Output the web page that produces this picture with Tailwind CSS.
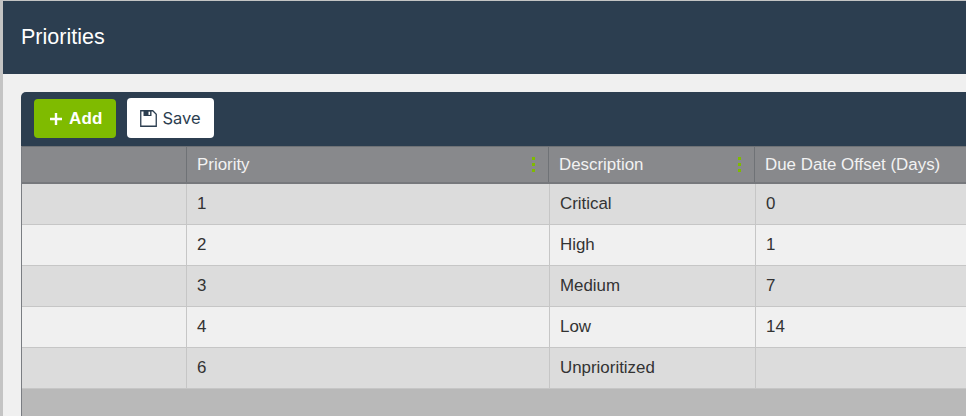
<!DOCTYPE html>
<html lang="en">
<head>
    <meta charset="UTF-8">
    <title>Priorities</title>
    <script src="https://cdn.jsdelivr.net/npm/@tailwindcss/browser@4"></script>
</head>
<body class="w-[966px] h-[416px] overflow-hidden bg-[#f0f0f0] font-['Liberation_Sans',Arial,sans-serif]">
    <div class="h-full border-l-[3px] border-[#c4c4c4] flex flex-col overflow-hidden">
        <!-- Page title -->
        <header class="h-[74px] shrink-0 border-t border-[#c4c4c4] bg-[#2c3e50] pl-[18px] pt-[21px]">
            <h1 class="text-[21.5px] leading-[30px] text-white">Priorities</h1>
        </header>

        <div class="pl-[18px] pt-[18px] w-[1100px]">
            <!-- Toolbar -->
            <div class="h-[54px] rounded-tl-[5px] bg-[#2c3e50] pl-[13px] pt-[7px] flex items-start gap-[11px]">
                <button class="h-[39px] w-[82px] rounded-[4px] bg-[#7fbb00] text-white font-bold text-[17px] tracking-[0.2px] flex items-center pl-[16px] gap-[7px]">
                    <svg class="w-[12px] h-[12px]" viewBox="0 0 12 12" fill="none" stroke="currentColor" stroke-width="2.4">
                        <path d="M6 0v12M0 6h12" />
                    </svg>
                    Add
                </button>
                <button class="h-[40px] w-[87px] -mt-px rounded-[4px] bg-white text-[#2c3e50] text-[16.5px] font-['Inter',sans-serif] flex items-center justify-center gap-[5px]">
                    <svg class="w-[17px] h-[17px]" viewBox="0 0 17 17" fill="none">
                        <path d="M0.75 0.75h12l3.5 3.5v12h-15.5z" stroke="#2c3e50" stroke-width="1.3" />
                        <rect x="3.5" y="1" width="8" height="5" fill="#2c3e50" />
                        <rect x="8.5" y="1.7" width="1.6" height="3.2" fill="#ffffff" />
                    </svg>
                    <span class="pt-px">Save</span>
                </button>
            </div>

            <!-- Grid -->
            <div class="border-l border-[#7a7d82]">
                <div class="grid grid-cols-[165px_362px_206px_1fr] h-[38px] bg-[#88898c] border-t border-[#6f7276] border-b-2 border-b-[#76787c] text-[16.9px] text-[#f2f2f2]">
                    <div class="border-r border-[#6f7276]"></div>
                    <div class="border-r border-[#6f7276] pl-[10px] pr-[13px] flex items-center justify-between">
                        <span>Priority</span>
                        <span class="flex flex-col gap-[3px]">
                            <i class="w-[3px] h-[3px] bg-[#7fbb00]"></i>
                            <i class="w-[3px] h-[3px] bg-[#7fbb00]"></i>
                            <i class="w-[3px] h-[3px] bg-[#7fbb00]"></i>
                        </span>
                    </div>
                    <div class="border-r border-[#6f7276] pl-[10px] pr-[13px] flex items-center justify-between">
                        <span>Description</span>
                        <span class="flex flex-col gap-[3px]">
                            <i class="w-[3px] h-[3px] bg-[#7fbb00]"></i>
                            <i class="w-[3px] h-[3px] bg-[#7fbb00]"></i>
                            <i class="w-[3px] h-[3px] bg-[#7fbb00]"></i>
                        </span>
                    </div>
                    <div class="pl-[10px] flex items-center">Due Date Offset (Days)</div>
                </div>

                <div class="text-[16.9px] text-[#333333]">
                    <div class="grid grid-cols-[165px_363px_206px_1fr] h-[41px] bg-[#dcdcdc] border-b border-[#c6c6c6]">
                        <div class="border-r border-[#c6c6c6]"></div>
                        <div class="border-r border-[#c6c6c6] pl-[10px] flex items-center">1</div>
                        <div class="border-r border-[#c6c6c6] pl-[10px] flex items-center">Critical</div>
                        <div class="pl-[10px] flex items-center">0</div>
                    </div>
                    <div class="grid grid-cols-[165px_363px_206px_1fr] h-[41px] bg-[#f0f0f0] border-b border-[#c6c6c6]">
                        <div class="border-r border-[#c6c6c6]"></div>
                        <div class="border-r border-[#c6c6c6] pl-[10px] flex items-center">2</div>
                        <div class="border-r border-[#c6c6c6] pl-[10px] flex items-center">High</div>
                        <div class="pl-[10px] flex items-center">1</div>
                    </div>
                    <div class="grid grid-cols-[165px_363px_206px_1fr] h-[41px] bg-[#dcdcdc] border-b border-[#c6c6c6]">
                        <div class="border-r border-[#c6c6c6]"></div>
                        <div class="border-r border-[#c6c6c6] pl-[10px] flex items-center">3</div>
                        <div class="border-r border-[#c6c6c6] pl-[10px] flex items-center">Medium</div>
                        <div class="pl-[10px] flex items-center">7</div>
                    </div>
                    <div class="grid grid-cols-[165px_363px_206px_1fr] h-[41px] bg-[#f0f0f0] border-b border-[#c6c6c6]">
                        <div class="border-r border-[#c6c6c6]"></div>
                        <div class="border-r border-[#c6c6c6] pl-[10px] flex items-center">4</div>
                        <div class="border-r border-[#c6c6c6] pl-[10px] flex items-center">Low</div>
                        <div class="pl-[10px] flex items-center">14</div>
                    </div>
                    <div class="grid grid-cols-[165px_363px_206px_1fr] h-[41px] bg-[#dcdcdc] border-b border-[#c6c6c6]">
                        <div class="border-r border-[#c6c6c6]"></div>
                        <div class="border-r border-[#c6c6c6] pl-[10px] flex items-center">6</div>
                        <div class="border-r border-[#c6c6c6] pl-[10px] flex items-center">Unprioritized</div>
                        <div class="pl-[10px] flex items-center"></div>
                    </div>
                </div>

                <!-- Empty grid area -->
                <div class="h-[40px] bg-[#b9b9b9]"></div>
            </div>
        </div>
    </div>
</body>
</html>
